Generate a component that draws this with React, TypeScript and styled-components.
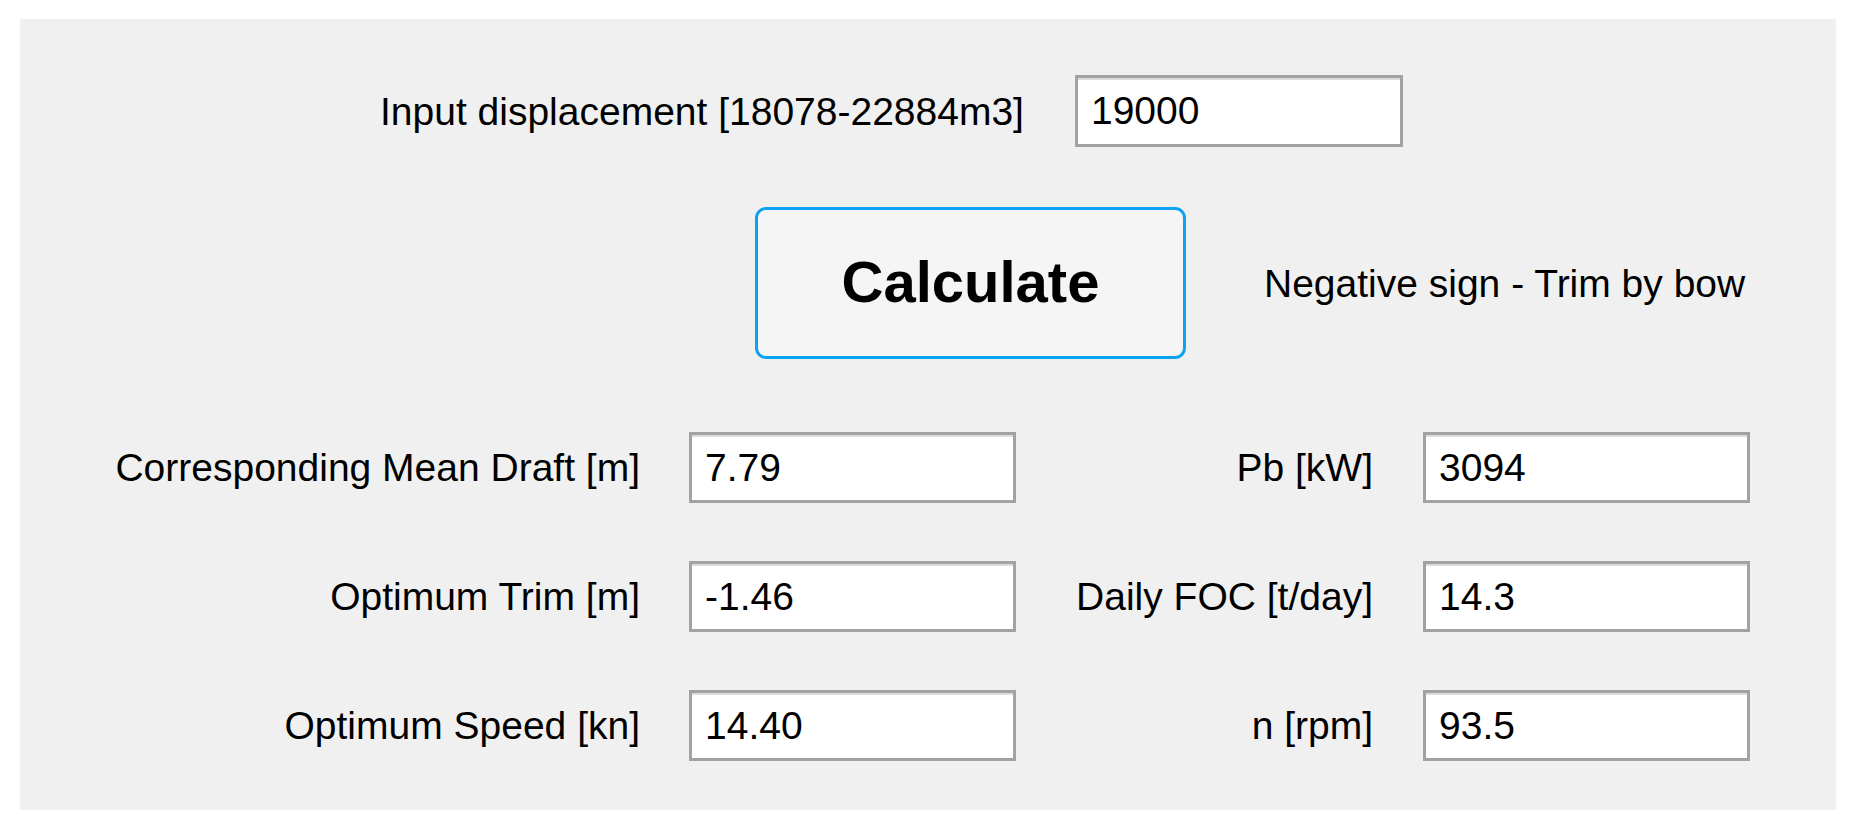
import React from 'react'
import styled, { createGlobalStyle } from 'styled-components'

const GlobalStyle = createGlobalStyle`
  body {
    margin: 0;
    background: #ffffff;
    font-family: 'Liberation Sans', Arial, sans-serif;
  }
`

const Panel = styled.div`
  display: flex;
  flex-direction: column;
  box-sizing: border-box;
  width: 1816px;
  height: 791px;
  margin: 19px 0 0 20px;
  padding-top: 56px;
  background: #f0f0f0;
  color: #000;
  font-size: 39px;
`

const TopRow = styled.div`
  display: flex;
  align-items: center;
  gap: 51px;
  margin-left: 360px;
`

const Label = styled.span`
  white-space: nowrap;
  line-height: 1;
`

const Field = styled.input<{ $w?: number; $h?: number }>`
  box-sizing: border-box;
  width: ${({ $w }) => $w ?? 327}px;
  height: ${({ $h }) => $h ?? 71}px;
  margin: 0;
  padding: 0 0 0 13px;
  border: 3px solid #a2a2a2;
  border-radius: 0;
  box-shadow: inset 0 2px 0 #dcdcdc;
  background: #ffffff;
  color: #000;
  font-family: 'Liberation Sans', Arial, sans-serif;
  font-size: 39px;
  outline: none;
`

const ActionRow = styled.div`
  display: flex;
  align-items: center;
  gap: 78px;
  margin: 60px 0 0 735px;
`

const CalcButton = styled.button`
  box-sizing: border-box;
  width: 431px;
  height: 152px;
  padding: 0 0 4px;
  border: 3px solid #0aa2f3;
  border-radius: 11px;
  background: #f5f5f5;
  color: #000;
  font-family: 'Liberation Sans', Arial, sans-serif;
  font-size: 58px;
  font-weight: 700;
  cursor: pointer;
`

const Results = styled.div`
  display: grid;
  grid-template-columns: 669px 327px 407px 327px;
  grid-template-rows: 71px 71px 71px;
  row-gap: 58px;
  align-items: center;
  margin-top: 73px;
`

const ResultLabel = styled(Label)<{ $gap: number }>`
  justify-self: end;
  padding-right: ${({ $gap }) => $gap}px;
`

const rows = [
  { left: 'Corresponding Mean Draft [m]', lv: '7.79', right: 'Pb [kW]', rv: '3094' },
  { left: 'Optimum Trim [m]', lv: '-1.46', right: 'Daily FOC [t/day]', rv: '14.3' },
  { left: 'Optimum Speed [kn]', lv: '14.40', right: 'n [rpm]', rv: '93.5' },
]

export default function App() {
  return (
    <>
      <GlobalStyle />
      <Panel>
        <TopRow>
          <Label>Input displacement [18078-22884m3]</Label>
          <Field $w={328} $h={72} defaultValue="19000" />
        </TopRow>
        <ActionRow>
          <CalcButton>Calculate</CalcButton>
          <Label>Negative sign - Trim by bow</Label>
        </ActionRow>
        <Results>
          {rows.map((r) => (
            <React.Fragment key={r.left}>
              <ResultLabel $gap={49}>{r.left}</ResultLabel>
              <Field readOnly value={r.lv} />
              <ResultLabel $gap={50}>{r.right}</ResultLabel>
              <Field readOnly value={r.rv} />
            </React.Fragment>
          ))}
        </Results>
      </Panel>
    </>
  )
}
